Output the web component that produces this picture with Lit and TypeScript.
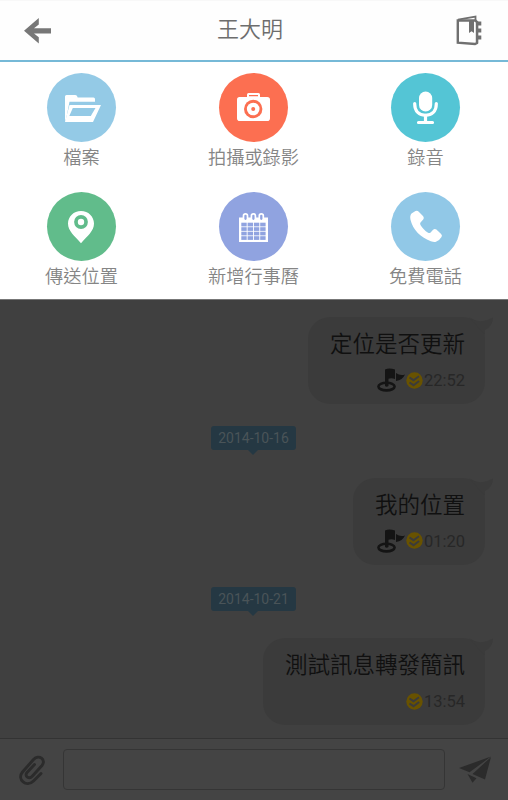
import { LitElement, html, css, svg } from "lit";
import { customElement } from "lit/decorators.js";

const icons = {
  folder: svg`<path d="M65 96.500q0-1.500 1.500-1.500h8.500q1.500 0 2 1l.7 1.500h15.800q1.500 0 1.500 1.500v2.800H69.500L66.500 117l-1.500 5z"/><path fill-rule="evenodd" d="M69.500 105h31.500l-8 17H65zM72.800 108l-3.500 8h21.500l4.700-8z"/>`,
  camera: svg`<path fill-rule="evenodd" d="M239.500 97H247v-2.500q0-1.500 1.500-1.500h10q1.500 0 1.500 1.500V97h7.200q2.800 0 2.800 2.800v18.400q0 2.800-2.800 2.800h-27.400q-2.800 0-2.800-2.800V99.800q0-2.800 2.500-2.800zM249 95v1.300h9V95z"/><circle class="cut" cx="253.200" cy="109" r="9.200"/><circle cx="253.200" cy="109" r="6.300"/><circle class="cut" cx="253.200" cy="109" r="2"/>`,
  mic: svg`<rect x="419" y="91.500" width="13.200" height="20" rx="6.600"/><path d="M414.700 103.500v.5c0 7.500 4.600 11.300 10.800 11.300s10.800-3.800 10.800-11.300v-.5M425.500 115v7M418.500 122.500h14" fill="none" stroke="#fff" stroke-width="3.200" stroke-linecap="round"/>`,
  pin: svg`<path d="M81 211c-7.300 0-13 5.500-13 12.600C68 231 74.500 236 81 243.300 87.500 236 94 231 94 223.600 94 216.500 88.300 211 81 211z"/><circle class="cut" cx="81" cy="222" r="6.900"/><circle cx="81" cy="222" r="3.200"/>`,
  calendar: svg`<path d="M239 217.500h29v24.500h-29z"/><g class="cut">${[0, 1, 2, 3].map(r => [0, 1, 2, 3].map(c => svg`<rect x=${241.300 + c * 6.300} y=${222.700 + r * 4.500} width="5.400" height="3.700"/>`))}</g><g class="bind" stroke="#fff" stroke-width="1.700">${[245.500, 253.400, 261.300].map(x => svg`<rect x=${x - 2} y="213.800" width="4" height="7" rx="2"/>`)}</g>`,
  phone: svg`<path d="M411.500 213.500l4-2.500q1.700-.8 3 .4l4.700 4.900q1.300 1.700 0 3.300l-2.700 3q-.8 1.100 0 2.400c1.900 3.200 4.400 5.800 7.600 7.700q1.400.7 2.500-.3l2.500-2.600q1.600-1.400 3.300-.2l4.700 4.300q1.500 1.400.4 3.100-2.200 3.700-5.500 4.800-2 .6-5.200-.6c-10.500-4-18-11.500-20.300-21.400q-.9-4.200 1-6.300z"/>`,
};

const actions = [
  { name: "檔案", tone: "sky", box: "47 73 69 69", icon: icons.folder },
  { name: "拍攝或錄影", tone: "coral", box: "219 73 69 69", icon: icons.camera },
  { name: "錄音", tone: "teal", box: "391 73 69 69", icon: icons.mic },
  { name: "傳送位置", tone: "green", box: "47 192 69 69", icon: icons.pin },
  { name: "新增行事曆", tone: "indigo", box: "219 192 69 69", icon: icons.calendar },
  { name: "免費電話", tone: "blue", box: "391 192 69 69", icon: icons.phone },
];

const flag = svg`<svg class="flag" width="28" height="24" viewBox="0 0 28 24"><ellipse cx="9.500" cy="18.600" rx="8.100" ry="3.800" fill="none" stroke="#141414" stroke-width="2.600"/><path fill="#141414" d="M8 1.500q4-2.200 10 0V11q-3.500-1.500-6.500-.3V18q-1.800 1.500-3.500 0zM19 5q4 3 9 1.500-2.500 5.500-9 6.500z"/></svg>`;
const tick = svg`<svg width="17" height="17" viewBox="0 0 17 17"><circle cx="8.500" cy="8.500" r="8.200" fill="#685200"/><path d="M3.500 5.500l4 2.700 5.500-4M3.500 10.500l4 2.700 5.700-4.200" fill="none" stroke="#3b3b3b" stroke-width="2"/></svg>`;

@customElement("app-root")
export class AppRoot extends LitElement {
  static styles = css`
    :host { display: flex; flex-direction: column; width: 508px; height: 800px; overflow: hidden; background: #404040; font-family: Roboto, "Noto Sans CJK TC", sans-serif; }
    svg { display: block; flex: none; }
    header { box-sizing: border-box; height: 62px; flex: none; display: grid; grid-template-columns: 60px 1fr 60px; align-items: center; background: #fefefe; border-top: 1px solid #f8f8f8; border-bottom: 2px solid #76b9d7; color: #6d6d6d; }
    h1 { margin: 0; text-align: center; font-size: 22px; font-weight: 350; line-height: 30px; padding: 0 8px 1px 0; }
    .back { margin-left: 24px; }
    .book { margin-left: 7px; }
    .actions { box-sizing: border-box; height: 238px; flex: none; display: grid; grid-template-columns: repeat(3, 172px); grid-auto-rows: 118.500px; justify-content: center; padding: 11px 1px 0 0; background: #fff; border-bottom: 1px solid #777; }
    .action { display: flex; flex-direction: column; align-items: center; font-size: 18.200px; font-weight: 350; line-height: 26px; color: #858585; }
    .disc { width: 69px; height: 69px; border-radius: 50%; background: var(--tone); margin-bottom: 3px; fill: #fff; }
    .cut, .bind { fill: var(--tone); }
    .sky { --tone: #94cae6; } .coral { --tone: #fc6f51; } .teal { --tone: #54c5d5; }
    .green { --tone: #61bc8b; } .indigo { --tone: #90a3e0; } .blue { --tone: #91c8e7; }
    main { flex: 1; display: flex; flex-direction: column; padding: 17px 23px 0 0; }
    .bubble { box-sizing: border-box; align-self: flex-end; position: relative; height: 87px; border-radius: 22px; background: #3b3b3b; padding: 12px 20px 0 22px; color: #101010; font-size: 22.500px; font-weight: 350; line-height: 30px; }
    .tail { position: absolute; right: -8px; top: 0; }
    .meta { display: flex; align-items: center; justify-content: flex-end; height: 24px; margin-top: 9px; color: #272727; font-size: 16.500px; font-weight: 400; }
    .meta time { margin-left: 1px; position: relative; top: 1px; }
    .flag { margin-right: 1px; }
    .date { box-sizing: border-box; position: relative; width: 85px; height: 24px; margin: 22px 0 27.500px 211px; border-radius: 3px; background: #253843; color: #4a5458; font-size: 14px; line-height: 25px; text-align: center; }
    .date::after { content: ""; position: absolute; left: 37px; top: 24px; border: 5px solid transparent; border-top-color: #253843; border-bottom: 0; }
    footer { box-sizing: border-box; height: 62px; flex: none; display: flex; align-items: center; padding: 0 16px 0 18px; border-top: 1px solid #333; background: #444; }
    .field { box-sizing: border-box; width: 382px; height: 41px; border: 1px solid #353535; border-radius: 4px; margin: 0 14px 1px 17px; }
  `;

  bubble(text: string, time: string, flagged: boolean) {
    return html`<div class="bubble">
      <svg class="tail" width="28" height="18" viewBox="0 0 28 18"><path fill="#3b3b3b" d="M4 0q10 8 24 .5Q28 9 20 13v5z"/></svg>
      <div>${text}</div>
      <div class="meta">${flagged ? flag : ""}${tick}<time>${time}</time></div>
    </div>`;
  }

  render() {
    return html`
      <header>
        <svg class="back" width="27" height="26" viewBox="24 18 27 26"><path fill="#777" d="M24 30.700L38.800 18v6.500L34 28.300H51v5.200H34l4.800 3.800V43.500z"/></svg>
        <h1>王大明</h1>
        <svg class="book" width="28" height="32" viewBox="455 15 28 32"><g fill="none" stroke="#707070"><path stroke-width="2.400" d="M457.800 20.500h17.600l1.600 1.500v21l-2 1-17.200-1.300z"/><path stroke-width="1.800" d="M458 19.600l17.500-3v4"/><path stroke-width="1.300" d="M477.500 21.500V43"/></g><path fill="#707070" d="M469 21h5v12l-2.400-1.800L469 33zM478 21.500h3.300v4H478zM478 28.500h3.300v4H478zM478 35.500h3.300v4H478z"/></svg>
      </header>
      <section class="actions">
        ${actions.map(a => html`<div class="action ${a.tone}"><svg class="disc" viewBox=${a.box}>${a.icon}</svg>${a.name}</div>`)}
      </section>
      <main>
        ${this.bubble("定位是否更新", "22:52", true)}
        <div class="date">2014-10-16</div>
        ${this.bubble("我的位置", "01:20", true)}
        <div class="date">2014-10-21</div>
        ${this.bubble("測試訊息轉發簡訊", "13:54", false)}
      </main>
      <footer>
        <svg width="28" height="32" viewBox="18 754 28 32"><path fill="none" stroke="#2b2b2b" stroke-width="2.900" stroke-linecap="round" stroke-linejoin="round" d="M41 773.500l-7.500 7.500c-7 7-17-1.500-11-9l11-12.500c5.500-6 13 .5 8.500 6l-9.500 10.500c-3.500 4-8.500 0-5.500-3.500l7.500-8"/></svg>
        <div class="field"></div>
        <svg width="32" height="27" viewBox="459 757 32 27"><path fill="#2b2b2b" d="M459 769l32-11.500-21.500 15.800zM491 758l-6 22.500-12.500-5.500zM467.500 775l9 4.300-4 4.500z"/></svg>
      </footer>`;
  }
}
